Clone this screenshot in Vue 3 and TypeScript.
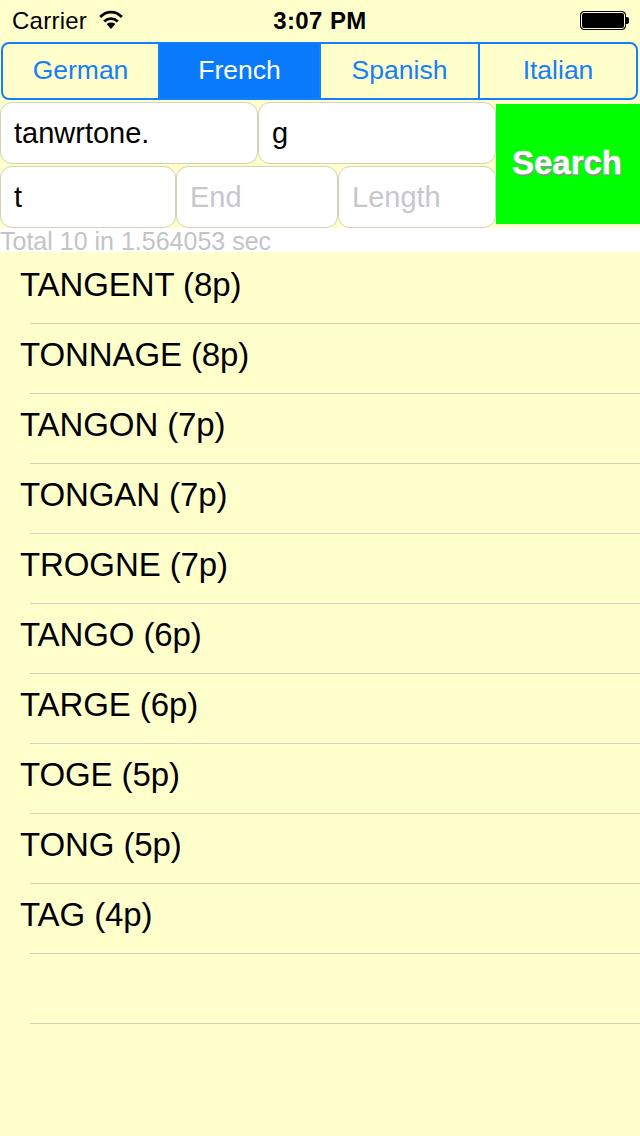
<script setup lang="ts">
const tabs = ['German', 'French', 'Spanish', 'Italian']
const words = ['TANGENT (8p)', 'TONNAGE (8p)', 'TANGON (7p)', 'TONGAN (7p)', 'TROGNE (7p)', 'TANGO (6p)', 'TARGE (6p)', 'TOGE (5p)', 'TONG (5p)', 'TAG (4p)', '', '']
</script>

<template>
  <div class="page">
    <div class="status">
      <div class="status-left">
        <span>Carrier</span>
        <svg width="24" height="19" viewBox="0 0 24 19" class="wifi">
          <path d="M1.2 7C7.6.6 16.4.6 22.8 7" fill="none" stroke="#000" stroke-width="2.8" />
          <path d="M5.2 11.4c4-3.8 9.6-3.8 13.6 0" fill="none" stroke="#000" stroke-width="2.8" />
          <path d="M12 19l-4.4-5c2.7-1.9 6.1-1.9 8.8 0z" fill="#000" />
        </svg>
      </div>
      <div class="time">3:07 PM</div>
      <div class="battery"><span class="battery-body"></span><span class="battery-tip"></span></div>
    </div>

    <div class="tabs">
      <div v-for="t in tabs" :key="t" class="tab" :class="{ active: t === 'French' }">{{ t }}</div>
    </div>

    <div class="form">
      <div class="fields">
        <div class="row row1">
          <div class="field">tanwrtone.</div>
          <div class="field">g</div>
        </div>
        <div class="row row2">
          <div class="field">t</div>
          <div class="field ph">End</div>
          <div class="field ph">Length</div>
        </div>
      </div>
      <div class="search"><span>Search</span></div>
    </div>

    <div class="total">Total 10 in 1.564053 sec</div>

    <div class="list">
      <div v-for="(w, i) in words" :key="i" class="item">
        <span class="word">{{ w }}</span>
      </div>
    </div>
  </div>
</template>

<style scoped>
.page {
  width: 640px;
  height: 1136px;
  background: #ffffcc;
  font-family: "Liberation Sans", Arial, sans-serif;
  overflow: hidden;
  color: #000;
}
.status {
  height: 42px;
  display: flex;
  align-items: center;
  justify-content: space-between;
  position: relative;
  padding: 0 11px 0 12px;
  box-sizing: border-box;
}
.status-left {
  display: flex;
  align-items: center;
  gap: 12px;
  font-size: 24px;
  letter-spacing: 0.25px;
}
.wifi {
  margin-top: -4px;
}
.time {
  position: absolute;
  left: 0;
  right: 0;
  text-align: center;
  font-size: 24px;
  letter-spacing: 0.4px;
  font-weight: 700;
}
.battery {
  display: flex;
  align-items: center;
  margin-top: -1px;
}
.battery-body {
  display: block;
  width: 46px;
  height: 19px;
  box-sizing: border-box;
  background: #000;
  border: 1px solid #000;
  border-radius: 4px;
  box-shadow: inset 0 0 0 1px #ffffcc;
}
.battery-tip {
  display: block;
  width: 3px;
  height: 7px;
  background: #000;
  border-radius: 0 2px 2px 0;
}
.tabs {
  height: 58px;
  margin: 0 2px 0 1px;
  display: grid;
  grid-template-columns: 155px 161px 159px 1fr;
  box-sizing: border-box;
  border: 2px solid #157efb;
  border-radius: 8px;
  overflow: hidden;
}
.tab {
  display: flex;
  align-items: center;
  justify-content: center;
  color: #157efb;
  font-size: 26.5px;
  padding-bottom: 2px;
  border-left: 2px solid #157efb;
}
.tab:first-child {
  border-left: 0;
}
.tab.active {
  background: #0a7afc;
  color: #fff;
}
.form {
  display: flex;
  margin-top: 2px;
}
.fields {
  width: 496px;
  display: flex;
  flex-direction: column;
  gap: 2px;
}
.row {
  display: grid;
  height: 62px;
}
.row1 {
  grid-template-columns: 258px 238px;
}
.row2 {
  grid-template-columns: 176px 162px 158px;
}
.field {
  box-sizing: border-box;
  background: #fff;
  border: 1px solid #d2d2b4;
  border-radius: 12px;
  display: flex;
  align-items: center;
  padding-left: 13px;
  font-size: 29px;
  color: #000;
}
.field.ph {
  color: #c7c7cd;
}
.search {
  width: 144px;
  height: 120px;
  margin-top: 2px;
  background: #00ff00;
  display: flex;
  align-items: center;
  justify-content: center;
  color: #fff;
  font-size: 33px;
  font-weight: 700;
  -webkit-text-stroke: 0.4px #fff;
  text-shadow: 1px 2px 1px #8f8f8f;
}
.search span {
  margin: -2px 2px 0 0;
}
.total {
  height: 24px;
  background: #fff;
  color: #c4c4c4;
  font-size: 25px;
  line-height: 26px;
  white-space: nowrap;
}
.item {
  height: 70px;
  box-sizing: border-box;
  position: relative;
  padding-left: 20px;
  font-size: 33px;
  line-height: 66px;
  letter-spacing: -0.1px;
}
.item::after {
  content: "";
  position: absolute;
  left: 30px;
  right: 0;
  top: 71px;
  height: 1px;
  background: #cfcfc0;
}
.item:last-child::after {
  display: none;
}
</style>
